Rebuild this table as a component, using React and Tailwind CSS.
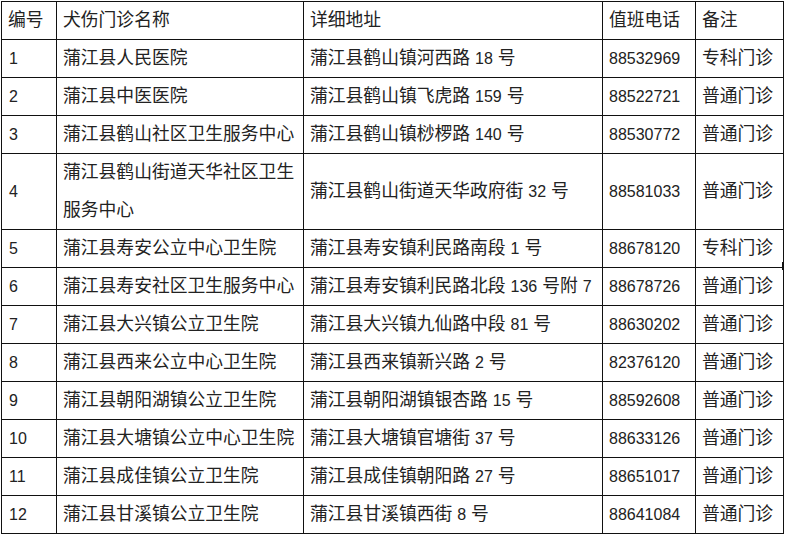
import React from "react";

const rows = [
  ["1", "蒲江县人民医院", "蒲江县鹤山镇河西路 18 号", "88532969", "专科门诊"],
  ["2", "蒲江县中医医院", "蒲江县鹤山镇飞虎路 159 号", "88522721", "普通门诊"],
  ["3", "蒲江县鹤山社区卫生服务中心", "蒲江县鹤山镇桫椤路 140 号", "88530772", "普通门诊"],
  ["4", "蒲江县鹤山街道天华社区卫生服务中心", "蒲江县鹤山街道天华政府街 32 号", "88581033", "普通门诊"],
  ["5", "蒲江县寿安公立中心卫生院", "蒲江县寿安镇利民路南段 1 号", "88678120", "专科门诊"],
  ["6", "蒲江县寿安社区卫生服务中心", "蒲江县寿安镇利民路北段 136 号附 7", "88678726", "普通门诊"],
  ["7", "蒲江县大兴镇公立卫生院", "蒲江县大兴镇九仙路中段 81 号", "88630202", "普通门诊"],
  ["8", "蒲江县西来公立中心卫生院", "蒲江县西来镇新兴路 2 号", "82376120", "普通门诊"],
  ["9", "蒲江县朝阳湖镇公立卫生院", "蒲江县朝阳湖镇银杏路 15 号", "88592608", "普通门诊"],
  ["10", "蒲江县大塘镇公立中心卫生院", "蒲江县大塘镇官塘街 37 号", "88633126", "普通门诊"],
  ["11", "蒲江县成佳镇公立卫生院", "蒲江县成佳镇朝阳路 27 号", "88651017", "普通门诊"],
  ["12", "蒲江县甘溪镇公立卫生院", "蒲江县甘溪镇西街 8 号", "88641084", "普通门诊"],
];

const cell = "border border-[#111] p-0 pl-[6px] align-middle leading-[37px] h-[37px]";

function Mixed({ text }) {
  const parts = text.split(/(\d+)/);
  return (
    <>
      {parts.map((p, i) =>
        /^\d+$/.test(p) ? (
          <span key={i} className="text-[16px]">
            {p}
          </span>
        ) : (
          <span key={i}>{p}</span>
        )
      )}
    </>
  );
}

export default function App() {
  return (
    <div
      className="relative w-[785px] h-[536px] bg-white text-[#222] text-[17.8px] overflow-hidden"
      style={{ fontFamily: '"Liberation Sans", "Noto Sans CJK SC", sans-serif' }}
    >
      <table className="table-fixed border-collapse w-[782px] ml-px mt-px">
        <colgroup>
          <col className="w-[55px]" />
          <col className="w-[247px]" />
          <col className="w-[299px]" />
          <col className="w-[93px]" />
          <col className="w-[88px]" />
        </colgroup>
        <thead>
          <tr>
            <td className={cell}>编号</td>
            <td className={cell}>犬伤门诊名称</td>
            <td className={cell}>详细地址</td>
            <td className={cell}>值班电话</td>
            <td className={cell}>备注</td>
          </tr>
        </thead>
        <tbody>
          {rows.map((r) => (
            <tr key={r[0]}>
              <td className={cell + " text-[16px] pl-[7px]"}>{r[0]}</td>
              <td
                className={
                  r[1].length > 14
                    ? "border border-[#111] p-0 pl-[6px] pr-[4px] align-middle leading-[37.5px] break-all"
                    : cell + " whitespace-nowrap"
                }
              >
                {r[1]}
              </td>
              <td className={cell + " whitespace-nowrap"}>
                <Mixed text={r[2]} />
              </td>
              <td className={cell + " text-[16px]"}>{r[3]}</td>
              <td className={cell + " whitespace-nowrap"}>{r[4]}</td>
            </tr>
          ))}
        </tbody>
      </table>
      <span className="absolute left-[782px] top-[262px] w-[2px] h-[8px] bg-[#111]" />
    </div>
  );
}
